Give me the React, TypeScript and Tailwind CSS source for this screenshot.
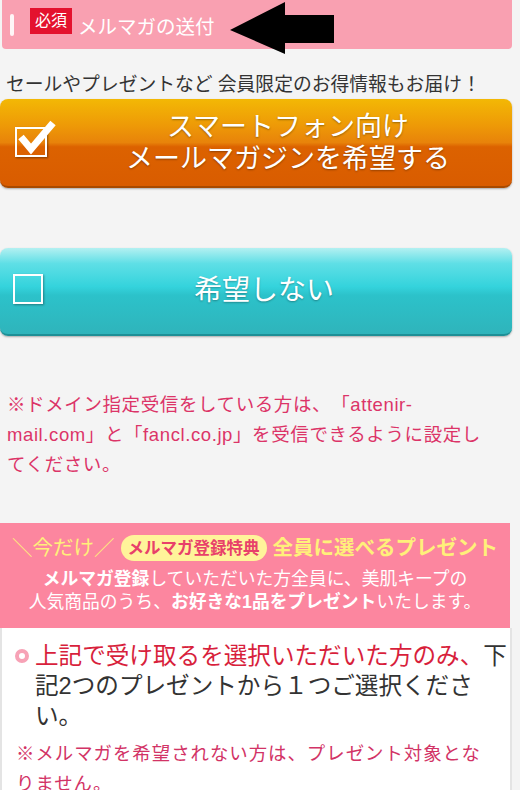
import React from "react";

export default function App() {
  return (
    <div className="min-h-[790px] w-[520px] overflow-hidden bg-[#f4f4f4] pr-[8px] font-['Liberation_Sans','Noto_Sans_CJK_JP',sans-serif] [text-spacing-trim:space-all]">
      {/* Header bar */}
      <div className="relative ml-[2px] flex h-[49px] items-center rounded-b-[4px] bg-[#f9a0b1]">
        <div className="ml-[8px] h-[22px] w-[4px] rounded-sm bg-white/90" />
        <div className="ml-[16px] -mt-[8px] flex h-[26px] items-center bg-[#e4122e] px-[5px] text-[16px] leading-none text-white">
          必須
        </div>
        <div className="ml-[6px] mt-[6px] text-[19.5px] leading-none text-white">メルマガの送付</div>
        <svg className="absolute left-[226px] top-[2px]" width="108" height="52" viewBox="0 0 108 52">
          <polygon points="2,28 57,0 57,13 106,13 106,41 57,41 57,52" fill="#000" />
        </svg>
      </div>

      <p className="mt-[24px] whitespace-nowrap pl-[6px] text-[18.8px] leading-[24px] text-[#333]">
        セールやプレゼントなど 会員限定のお得情報もお届け！
      </p>

      {/* Orange button */}
      <div className="relative mt-[2px] flex h-[89px] items-center rounded-[8px] border-b-[2px] border-[#a84a00] bg-[linear-gradient(180deg,#f3b805_0%,#ee9a07_30%,#e8830a_50%,#dc6200_55%,#d95c00_100%)] shadow-[0_1px_2px_rgba(0,0,0,0.3)]">
        <div className="absolute left-[15px] top-[28px] flex h-[30px] w-[32px] items-center justify-center border-[2px] border-white shadow-[1px_1px_2px_rgba(0,0,0,0.4)]">
          <svg width="40" height="36" viewBox="0 0 40 36" className="absolute -top-[10px] left-[0px]">
            <path d="M4 18 L14 30 L36 4" fill="none" stroke="#fff" strokeWidth="7" strokeLinejoin="miter" />
          </svg>
        </div>
        <div className="w-full pl-[64px] text-center text-[27px] leading-[32px] text-white [text-shadow:0_1px_2px_rgba(0,0,0,0.35)]">
          スマートフォン向け
          <br />
          メールマガジンを希望する
        </div>
      </div>

      {/* Teal button */}
      <div className="relative mt-[60px] flex h-[88px] items-center rounded-[8px] border-b-[2px] border-[#1e8f96] bg-[linear-gradient(180deg,#b3f0f1_0%,#5fdfe6_18%,#34d3dc_45%,#2cc2ca_55%,#2fb4bb_100%)] shadow-[0_1px_2px_rgba(0,0,0,0.3)]">
        <div className="absolute left-[13px] top-[26px] h-[30px] w-[30px] border-[2px] border-white shadow-[1px_1px_2px_rgba(0,0,0,0.35)]" />
        <div className="w-full pl-[16px] text-center text-[28px] leading-none text-white [text-shadow:0_1px_2px_rgba(0,0,0,0.3)]">
          希望しない
        </div>
      </div>

      {/* Notice */}
      <p className="mt-[54px] w-[510px] whitespace-nowrap pl-[7px] text-[18.5px] leading-[30px] tracking-[0.6px] text-[#dc3468]">
        ※ドメイン指定受信をしている方は、「attenir-
        <br />
        mail.com」と「fancl.co.jp」を受信できるように設定し
        <br />
        てください。
      </p>

      {/* Pink present box */}
      <div className="mt-[43px] mr-[2px] flex h-[105px] flex-col items-center bg-[#fc869f] pt-[11px]">
        <div className="flex items-center whitespace-nowrap text-[20.5px] font-bold leading-[28px] text-[#fff07a]">
          <span className="font-normal">＼今だけ／</span>
          <span className="mx-[6px] rounded-full bg-[#fff49a] px-[7px] text-[16.5px] leading-[26px] text-[#e8406a]">
            メルマガ登録特典
          </span>
          <span>全員に選べるプレゼント</span>
        </div>
        <div className="mt-[6px] text-center text-[17.8px] leading-[23px] text-white">
          <b>メルマガ登録</b>していただいた方全員に、美肌キープの
          <br />
          人気商品のうち、<b>お好きな1品をプレゼント</b>いたします。
        </div>
      </div>

      {/* White box */}
      <div className="h-[170px] border-x-[2px] border-[#e4e4e4] bg-white pt-[13px]">
        <div className="relative pl-[33px] text-[23.6px] leading-[30px] text-[#333]">
          <span className="absolute left-[13px] top-[8px] h-[14px] w-[14px] rounded-full border-[4px] border-[#f7a2b6] bg-white" />
          <span className="text-[#d81f3c]">上記で受け取るを選択いただいた方のみ、</span>下記2つのプレゼントから１つご選択ください。
        </div>
        <p className="mt-[8px] whitespace-nowrap pl-[14px] text-[18.4px] leading-[30px] tracking-[1px] text-[#d23366]">
          ※メルマガを希望されない方は、プレゼント対象とな
          <br />
          りません。
        </p>
      </div>
    </div>
  );
}
